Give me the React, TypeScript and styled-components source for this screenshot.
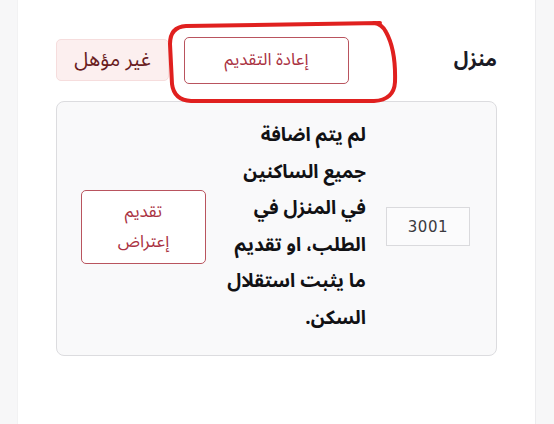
import React from 'react';
import styled, { createGlobalStyle } from 'styled-components';

const GlobalStyle = createGlobalStyle`
  html, body {
    margin: 0;
    padding: 0;
    background: #f7f7f8;
    font-family: "Noto Sans Arabic", "Noto Sans", "DejaVu Sans", sans-serif;
  }
`;

const Page = styled.div`
  padding: 0 19px 0 18px;
  height: 424px;
  overflow: hidden;
`;

const Card = styled.div`
  position: relative;
  direction: rtl;
  background: #fff;
  height: 424px;
  box-sizing: border-box;
  padding: 36px 38px 0 38px;
  box-shadow: 1px 0 0 #ececee, -1px 0 0 #f2f2f3;
`;

const HeaderRow = styled.div`
  display: flex;
  align-items: center;
  justify-content: space-between;
  height: 48px;
`;

const Title = styled.h3`
  margin: 0;
  font-size: 20px;
  font-weight: 700;
  color: #1b1b26;
`;

const Actions = styled.div`
  display: flex;
  align-items: center;
  gap: 15px;
`;

const OutlineButton = styled.button<{ $w: number; $h: number }>`
  display: flex;
  flex-direction: column;
  align-items: center;
  justify-content: center;
  gap: 4px;
  width: ${(p) => p.$w}px;
  height: ${(p) => p.$h}px;
  background: #fff;
  border: 1px solid #b9545e;
  border-radius: 5px;
  color: #aa3242;
  font-family: inherit;
  font-size: 17px;
  line-height: 26px;
  padding: 0 6px;
  cursor: pointer;
`;

const Badge = styled.span`
  display: inline-flex;
  align-items: center;
  justify-content: center;
  width: 113px;
  height: 42px;
  box-sizing: border-box;
  background: #fcefef;
  border: 1px solid #f6dddd;
  border-radius: 5px;
  color: #6a1d1f;
  font-size: 20px;
`;

const Box = styled.div`
  margin-top: 17px;
  display: flex;
  align-items: center;
  gap: 20px;
  padding: 14px 26px 18px 24px;
  height: 255px;
  box-sizing: border-box;
  background: #f9f9fa;
  border: 1px solid #dcdcdf;
  border-radius: 8px;
`;

const CodeField = styled.div`
  width: 85px;
  height: 39px;
  box-sizing: border-box;
  display: flex;
  align-items: center;
  justify-content: center;
  border: 1px solid #dadadd;
  background: #fbfbfc;
  color: #3a3a3f;
  font-family: "DejaVu Sans", sans-serif;
  font-size: 15px;
  letter-spacing: 0.5px;
`;

const Message = styled.p`
  width: 140px;
  flex-shrink: 0;
  margin: 0;
  white-space: nowrap;
  font-size: 19px;
  font-weight: 700;
  line-height: 36.5px;
  color: #111114;
`;

const Marker = styled.svg`
  position: absolute;
  left: 0;
  top: 0;
  pointer-events: none;
`;

const messageLines = [
  'لم يتم اضافة',
  'جميع الساكنين',
  'في المنزل في',
  'الطلب، او تقديم',
  'ما يثبت استقلال',
  'السكن.',
];

export default function App() {
  return (
    <Page>
      <GlobalStyle />
      <Card>
        <HeaderRow>
          <Title>منزل</Title>
          <Actions>
            <OutlineButton $w={165} $h={47}>إعادة التقديم</OutlineButton>
            <Badge>غير مؤهل</Badge>
          </Actions>
        </HeaderRow>
        <Box>
          <CodeField>3001</CodeField>
          <Message>
            {messageLines.map((line, i) => (
              <React.Fragment key={i}>
                {line}
                {i < messageLines.length - 1 && <br />}
              </React.Fragment>
            ))}
          </Message>
          <OutlineButton $w={126} $h={74}>
            <span>تقديم</span>
            <span>إعتراض</span>
          </OutlineButton>
        </Box>
        {/* hand-drawn red marker around the resubmit button */}
        <Marker width="517" height="120" viewBox="0 0 517 120">
          <path
            d="M362 23 L168 26 Q152 27 152 44 L154 84 Q156 100 173 101 L356 101 Q376 100 377 82 Q378 50 368 32 Q364 24 356 23"
            fill="none"
            stroke="#e0201f"
            strokeWidth="4"
            strokeLinecap="round"
            strokeLinejoin="round"
          />
        </Marker>
      </Card>
    </Page>
  );
}
